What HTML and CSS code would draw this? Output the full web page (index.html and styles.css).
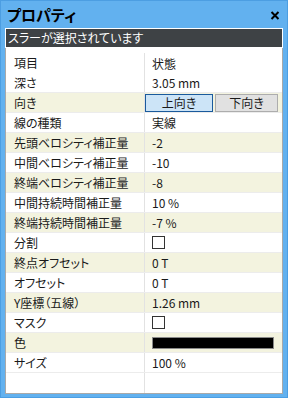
FILE: index.html
```html
<!DOCTYPE html>
<html lang="ja">
<head>
    <meta charset="UTF-8">
    <title>プロパティ</title>
    <link rel="stylesheet" href="styles.css">
</head>
<body>
    <div class="window">
        <div class="titlebar">
            <span class="title">プロパティ</span>
            <svg class="close" width="10" height="9" viewBox="0 0 10 9">
                <path d="M1.5 1 L8.5 8 M8.5 1 L1.5 8" stroke="#000" stroke-width="2" fill="none"/>
            </svg>
        </div>
        <div class="status">スラーが選択されています</div>
        <div class="pane">
            <div class="row head">
                <div class="label">項目</div>
                <div class="value">状態</div>
            </div>
            <div class="row">
                <div class="label">深さ</div>
                <div class="value">3.05 mm</div>
            </div>
            <div class="row alt">
                <div class="label">向き</div>
                <div class="value buttons">
                    <button class="btn active">上向き</button>
                    <button class="btn">下向き</button>
                </div>
            </div>
            <div class="row">
                <div class="label">線の種類</div>
                <div class="value">実線</div>
            </div>
            <div class="row alt">
                <div class="label">先頭ベロシティ補正量</div>
                <div class="value">-2</div>
            </div>
            <div class="row">
                <div class="label">中間ベロシティ補正量</div>
                <div class="value">-10</div>
            </div>
            <div class="row alt">
                <div class="label">終端ベロシティ補正量</div>
                <div class="value">-8</div>
            </div>
            <div class="row">
                <div class="label">中間持続時間補正量</div>
                <div class="value">10 %</div>
            </div>
            <div class="row alt">
                <div class="label">終端持続時間補正量</div>
                <div class="value">-7 %</div>
            </div>
            <div class="row">
                <div class="label">分割</div>
                <div class="value"><span class="check"></span></div>
            </div>
            <div class="row alt">
                <div class="label">終点オフセット</div>
                <div class="value">0 T</div>
            </div>
            <div class="row">
                <div class="label">オフセット</div>
                <div class="value">0 T</div>
            </div>
            <div class="row alt">
                <div class="label">Y座標（五線）</div>
                <div class="value">1.26 mm</div>
            </div>
            <div class="row">
                <div class="label">マスク</div>
                <div class="value"><span class="check"></span></div>
            </div>
            <div class="row alt">
                <div class="label">色</div>
                <div class="value"><span class="swatch"></span></div>
            </div>
            <div class="row">
                <div class="label">サイズ</div>
                <div class="value">100 %</div>
            </div>
            <div class="row filler">
                <div class="label"></div>
                <div class="value"></div>
            </div>
        </div>
    </div>
</body>
</html>
```

FILE: styles.css
```css
body {
    margin: 0;
    font-family: "Noto Sans CJK JP", "Noto Sans", sans-serif;
    font-size: 12px;
    font-feature-settings: "palt";
    color: #1a1a1a;
}
.window {
    width: 288px;
    height: 398px;
    box-sizing: border-box;
    background-color: #62b1ef;
    border: 1px solid #4c9ee2;
    padding: 0 4px 3px 4px;
    display: flex;
    flex-direction: column;
}
.titlebar {
    height: 27px;
    display: flex;
    align-items: center;
    justify-content: space-between;
    padding: 0 3px 0 2px;
}
.title {
    font-size: 15px;
    font-weight: bold;
    color: #000;
    line-height: 27px;
}
.close {
    display: block;
    margin-top: 1px;
}
.status {
    height: 20px;
    box-sizing: border-box;
    border: 1px solid #ffffff;
    background-color: #3e4245;
    color: #ffffff;
    line-height: 18px;
    padding-left: 2px;
    font-size: 12px;
}
.pane {
    flex: 1;
    background-color: #ffffff;
    border: 1px solid #a9a9a9;
    border-top: none;
    padding-top: 5px;
    display: flex;
    flex-direction: column;
}
.row {
    display: grid;
    grid-template-columns: 138px 1fr;
    height: 20px;
    box-sizing: border-box;
    border-bottom: 1px solid #ececec;
}
.row.alt {
    background-color: #f3f3df;
}
.row.head {
    border-bottom: none;
}
.row.filler {
    flex: 1;
    border-bottom: none;
}
.label {
    padding-left: 8px;
    line-height: 19px;
    white-space: nowrap;
}
.value {
    border-left: 1px solid #e2e2e2;
    padding-left: 7px;
    line-height: 19px;
    display: flex;
    align-items: center;
}
.value.buttons {
    padding-left: 0;
    gap: 2px;
    align-items: flex-start;
}
.btn {
    font-family: inherit;
    font-size: 12px;
    font-feature-settings: "palt";
    color: #1a1a1a;
    height: 18px;
    margin-top: 1px;
    padding: 0;
    line-height: 16px;
    border: 1px solid #adadad;
    background-color: #e1e1e1;
    width: 63px;
}
.btn.active {
    width: 68px;
    border-color: #1a5a9c;
    background-color: #cce4f7;
}
.check {
    width: 11px;
    height: 11px;
    border: 1px solid #333333;
    background-color: #ffffff;
    display: block;
}
.swatch {
    width: 120px;
    height: 10px;
    border: 1px solid #8a8a8a;
    background-color: #000000;
    display: block;
}
```
